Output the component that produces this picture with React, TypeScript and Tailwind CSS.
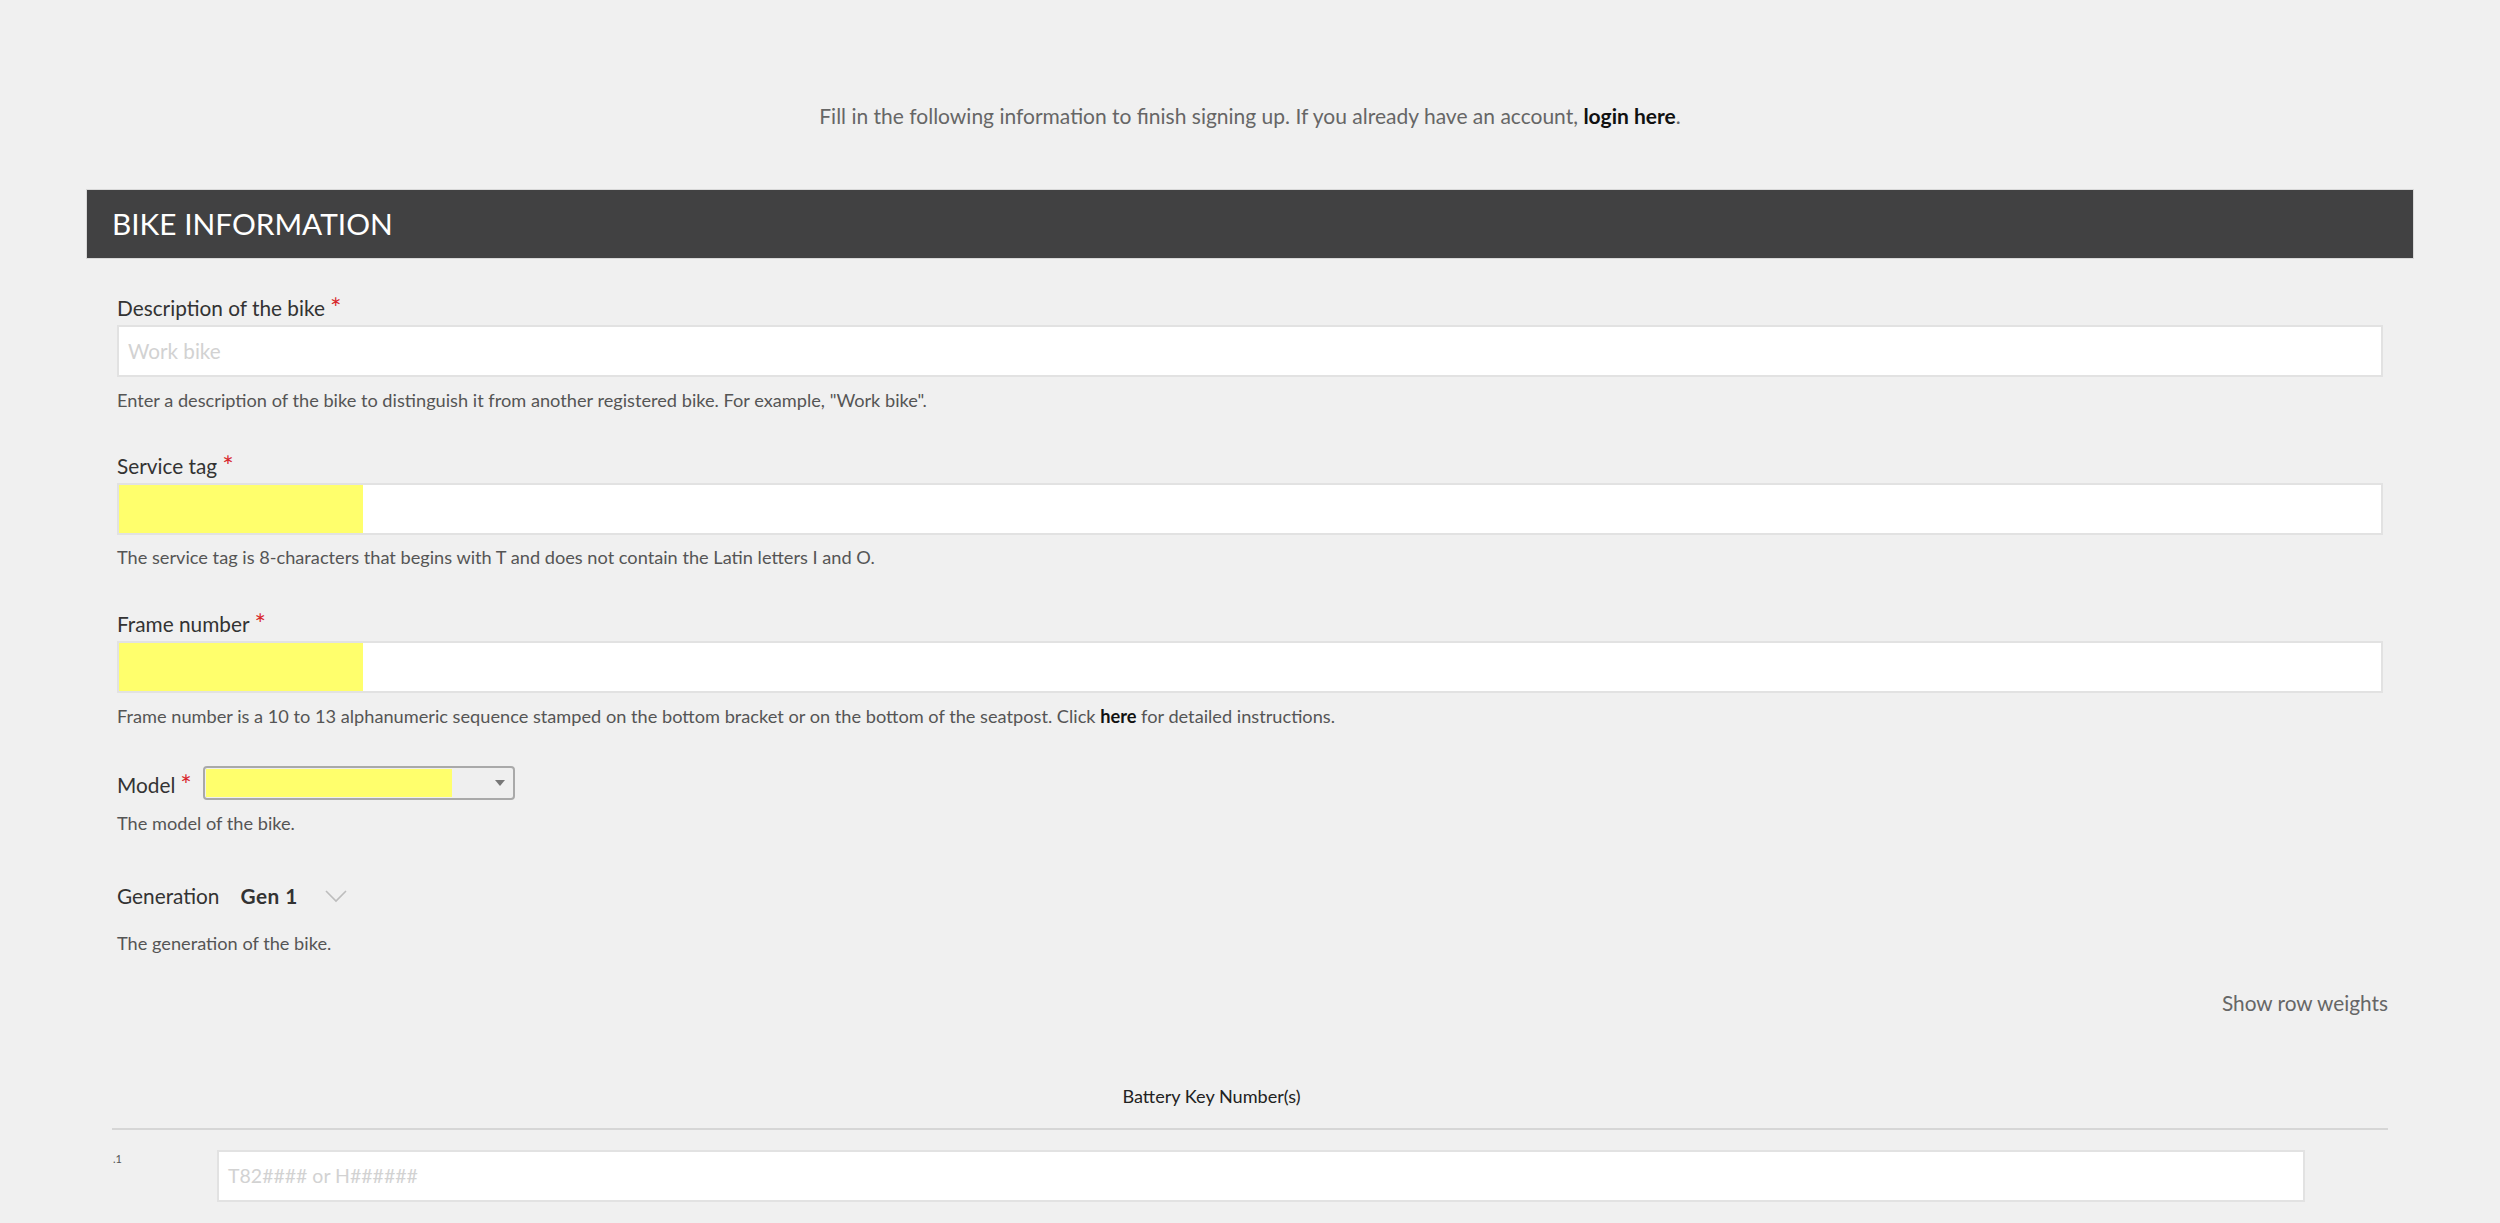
import React from "react";

const font = { fontFamily: "Lato, 'Open Sans', sans-serif" };

function Label({ text, required }: { text: string; required?: boolean }) {
  return (
    <div className="h-[24px] leading-[24px] text-[20.8px] text-[#333333] whitespace-nowrap">
      {text}
      {required && <span className="ml-[5px] text-[27px] text-[#d8262b] relative top-[2px]">*</span>}
    </div>
  );
}

function Help({ children }: { children: React.ReactNode }) {
  return <div className="h-[22px] leading-[22px] text-[18.2px] text-[#555555]">{children}</div>;
}

function TextBox({ placeholder, autofill, small }: { placeholder?: string; autofill?: boolean; small?: boolean }) {
  return (
    <div className="flex h-[52px] border-2 border-[#e2e2e2] bg-white">
      {autofill && <div className="w-[244px] h-full bg-[#ffff6c]" />}
      {placeholder && (
        <span className={small ? "pl-[9px] leading-[48px] text-[19.5px] text-[#d2d2d2]" : "pl-[9px] leading-[48px] text-[20.7px] text-[#d2d2d2]"}>
          {placeholder}
        </span>
      )}
    </div>
  );
}

export default function App() {
  return (
    <div className="min-h-screen bg-[#f0f0f0] px-[86px]" style={font}>
      {/* intro */}
      <p className="pt-[104px] text-center text-[21px] leading-[24px] text-[#666666]">
        Fill in the following information to finish signing up. If you already have an account,{" "}
        <span className="font-bold text-[#111111]">login here</span>.
      </p>

      {/* section header */}
      <div className="mt-[61px] h-[70px] flex items-center bg-[#414142] border border-[#d8d8d8] px-[25px]">
        <h2 className="text-[29.8px] text-white">BIKE INFORMATION</h2>
      </div>

      <div className="px-[31px]">
        <div className="mt-[35px]">
          <Label text="Description of the bike" required />
        </div>
        <div className="mt-[7px]">
          <TextBox placeholder="Work bike" />
        </div>
        <div className="mt-[12px]">
          <Help>
            Enter a description of the bike to distinguish it from another registered bike. For example, "Work bike".
          </Help>
        </div>

        <div className="mt-[41px]">
          <Label text="Service tag" required />
        </div>
        <div className="mt-[7px]">
          <TextBox autofill />
        </div>
        <div className="mt-[11px]">
          <Help>The service tag is 8-characters that begins with T and does not contain the Latin letters I and O.</Help>
        </div>

        <div className="mt-[42px]">
          <Label text="Frame number" required />
        </div>
        <div className="mt-[7px]">
          <TextBox autofill />
        </div>
        <div className="mt-[12px]">
          <Help>
            Frame number is a 10 to 13 alphanumeric sequence stamped on the bottom bracket or on the bottom of the
            seatpost. Click <span className="font-bold text-[#111111]">here</span> for detailed instructions.
          </Help>
        </div>

        {/* model */}
        <div className="mt-[39px] flex items-center gap-[11px]">
          <Label text="Model" required />
          <div className="flex items-center w-[312px] h-[34px] rounded-[4px] border-2 border-[#a9a9a9] bg-[#efefef] p-[1px] pr-[8px]">
            <div className="w-[246px] h-full bg-[#ffff6c]" />
            <div className="ml-auto w-0 h-0 border-l-[5px] border-r-[5px] border-t-[6px] border-l-transparent border-r-transparent border-t-[#777777]" />
          </div>
        </div>
        <div className="mt-[12px]">
          <Help>The model of the bike.</Help>
        </div>

        {/* generation */}
        <div className="mt-[50px] flex items-center h-[24px] text-[20.8px] text-[#333333]">
          <span>Generation</span>
          <span className="ml-[21px] font-bold tracking-[0.5px]">Gen 1</span>
          <svg className="ml-[27px]" width="22" height="13" viewBox="0 0 22 13" fill="none">
            <path d="M1 1l10 10L21 1" stroke="#bdbdbd" strokeWidth="1.6" />
          </svg>
        </div>
        <div className="mt-[24px]">
          <Help>The generation of the bike.</Help>
        </div>
      </div>

      {/* row weights */}
      <div className="mt-[37px] flex justify-end pr-[26px]">
        <span className="text-[20.8px] leading-[24px] text-[#666666]">Show row weights</span>
      </div>

      {/* battery table */}
      <div className="mx-[26px] mt-[70px]">
        <div className="h-[22px] flex justify-center pr-[77px]">
          <span className="text-[18.1px] leading-[22px] text-[#222222]">Battery Key Number(s)</span>
        </div>
        <div className="mt-[21px] h-[2px] bg-[#d6d6d6]" />
        <div className="mt-[20px] flex items-start">
          <div className="w-[105px] pl-[1px] pt-[2px] text-[11px] leading-[14px] text-[#555555]">.1</div>
          <div className="w-[2088px]">
            <TextBox placeholder="T82#### or H######" small />
          </div>
        </div>
      </div>
    </div>
  );
}
